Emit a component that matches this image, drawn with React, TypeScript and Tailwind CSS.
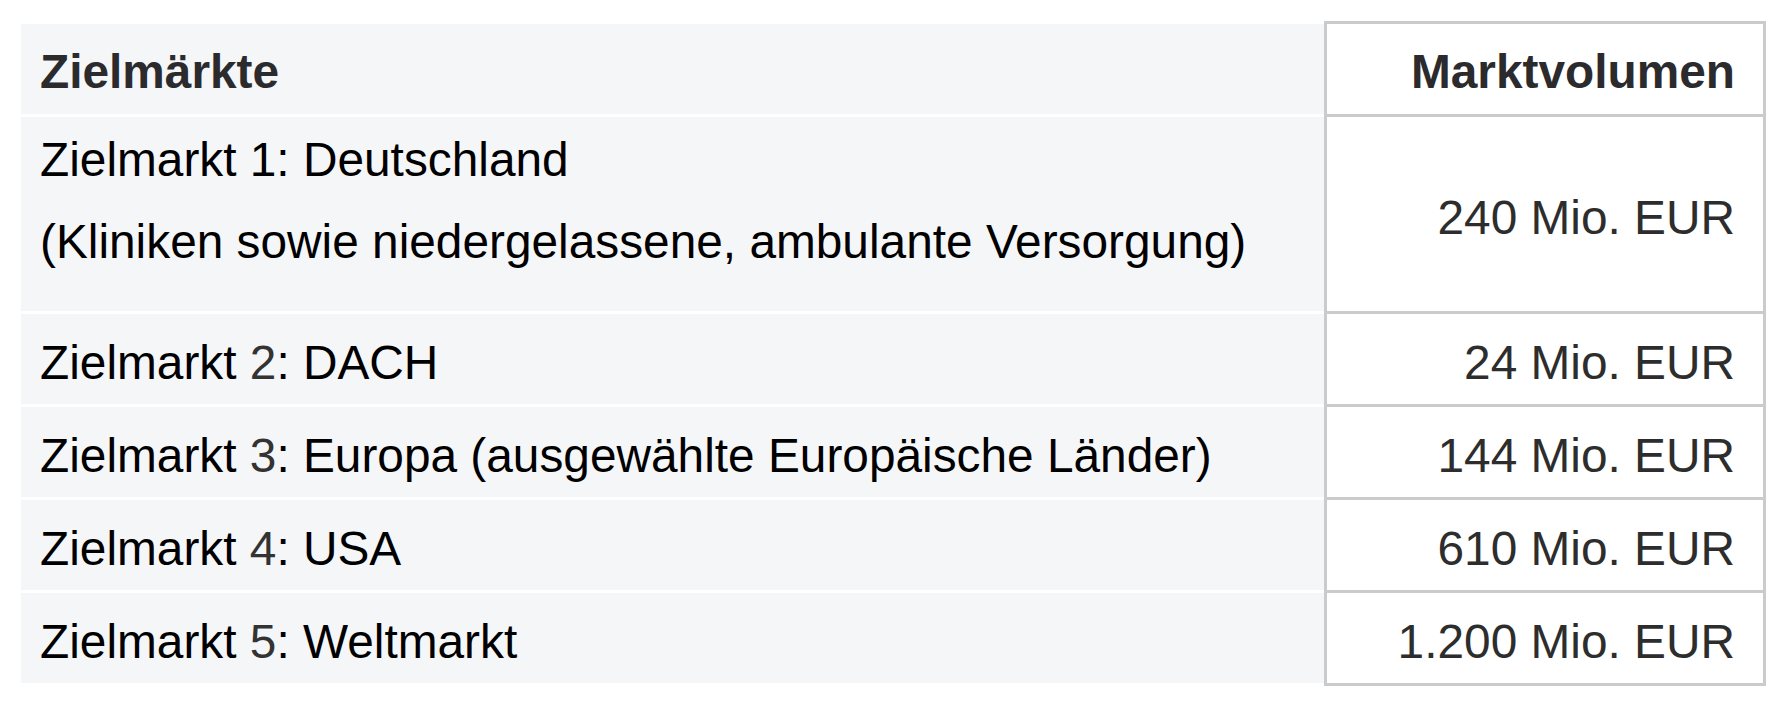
import React from "react";

type Row = {
  label: React.ReactNode;
  value: string;
  tall?: boolean;
};

const rows: Row[] = [
  {
    label: (
      <>
        Zielmarkt 1: Deutschland
        <br />
        (Kliniken sowie niedergelassene, ambulante Versorgung)
      </>
    ),
    value: "240 Mio. EUR",
    tall: true,
  },
  {
    label: (
      <>
        Zielmarkt <span className="text-[#333]">2</span>: DACH
      </>
    ),
    value: "24 Mio. EUR",
  },
  {
    label: (
      <>
        Zielmarkt <span className="text-[#333]">3</span>: Europa (ausgewählte Europäische Länder)
      </>
    ),
    value: "144 Mio. EUR",
  },
  {
    label: (
      <>
        Zielmarkt <span className="text-[#333]">4</span>: USA
      </>
    ),
    value: "610 Mio. EUR",
  },
  {
    label: (
      <>
        Zielmarkt <span className="text-[#333]">5</span>: Weltmarkt
      </>
    ),
    value: "1.200 Mio. EUR",
  },
];

export default function App() {
  return (
    <div className="min-h-screen bg-white pt-[21px] pl-[21px] font-['Liberation_Sans',Arial,sans-serif] text-[47.8px]">
      <div className="flex flex-col w-[1745px]">
        {/* header */}
        <div className="flex">
          <div className="w-[1303px] h-[93px] border-t-[3px] border-white bg-[#f5f6f8] pl-[19px] pt-[7px] leading-[82px] font-bold text-[#2b2b2d]">
            Zielmärkte
          </div>
          <div className="w-[442px] h-[93px] border-t-[3px] border-x-[3px] border-[#cbcbcb] bg-white flex items-start justify-end pr-[28px] pt-[7px] leading-[82px] font-bold text-[#2b2b2d]">
            Marktvolumen
          </div>
        </div>

        {rows.map((row, i) => {
          const last = i === rows.length - 1;
          return (
            <div key={i} className="flex">
              <div
                className={
                  "w-[1303px] border-t-[3px] border-white bg-[#f5f6f8] pl-[19px] leading-[81.6px] text-black " +
                  (row.tall ? "h-[197px] pt-[2px]" : "pt-[8px] ") +
                  (last ? "h-[96px] border-b-[3px]" : row.tall ? "" : "h-[93px]")
                }
              >
                {row.label}
              </div>
              <div
                className={
                  "w-[442px] border-t-[3px] border-x-[3px] border-[#cbcbcb] bg-white flex items-center justify-end pr-[28px] pt-[8px] leading-[82px] text-[#2d2d2d] " +
                  (row.tall ? "h-[197px]" : "") +
                  (last ? "h-[96px] border-b-[3px]" : row.tall ? "" : "h-[93px]")
                }
              >
                {row.value}
              </div>
            </div>
          );
        })}
      </div>
    </div>
  );
}
